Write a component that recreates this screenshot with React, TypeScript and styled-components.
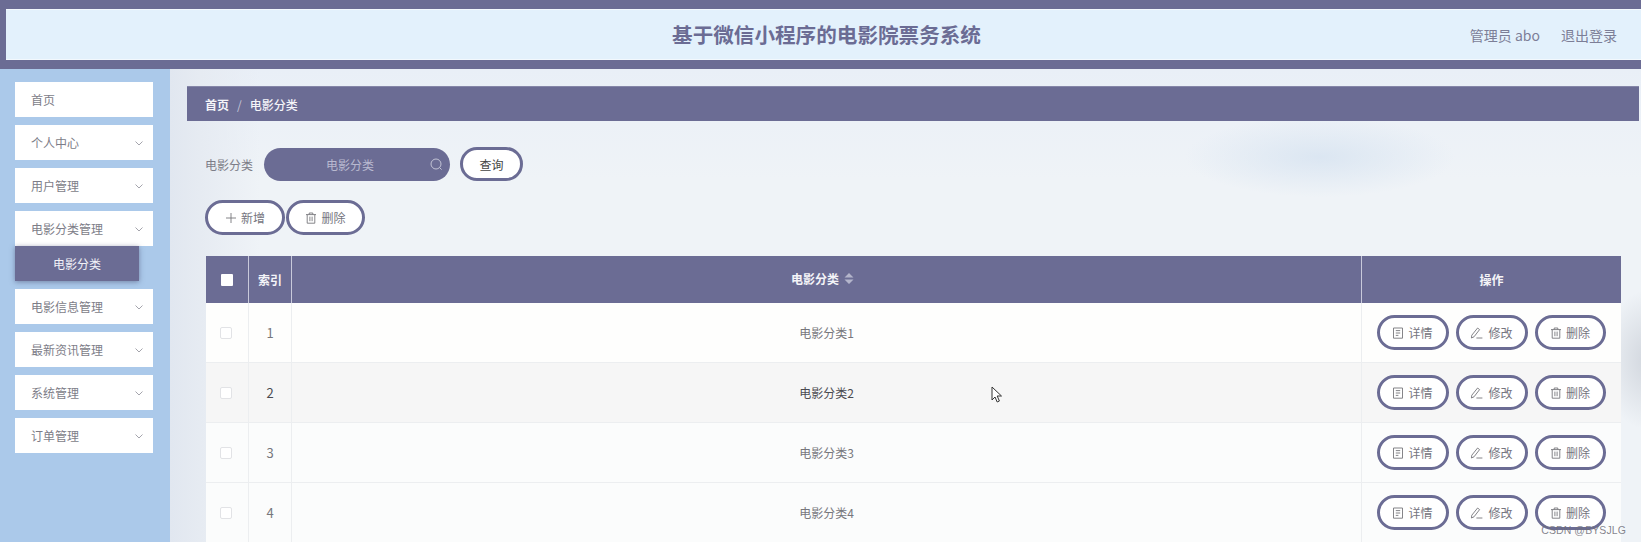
import styled, { createGlobalStyle } from "styled-components";

const purple = "#6b6c94";

const GlobalStyle = createGlobalStyle`
  html, body {
    margin: 0;
    padding: 0;
    height: 542px;
    overflow: hidden;
    font-family: "Noto Sans CJK SC", "Noto Sans", sans-serif;
  }
  * {
    box-sizing: border-box;
  }
`;

const Page = styled.div`
  width: 1641px;
  height: 542px;
  display: flex;
  flex-direction: column;
  position: relative;
  overflow: hidden;
`;

const Header = styled.header`
  height: 69px;
  flex: none;
  background: ${purple};
  padding: 9px 0 9px 6px;
`;

const HeaderInner = styled.div`
  height: 51px;
  background: #e3f1fc;
  border-top: 1px solid #f2f8fd;
  border-bottom: 1px solid #f2f8fd;
  display: grid;
  grid-template-columns: 1fr auto 1fr;
  align-items: center;
`;

const Title = styled.h1`
  grid-column: 2;
  margin: 0 0 0 6px;
  font-size: 20.6px;
  line-height: 1;
  font-weight: 700;
  color: ${purple};
`;

const UserBar = styled.div`
  grid-column: 3;
  justify-self: end;
  display: flex;
  gap: 21px;
  padding-right: 24px;
  font-size: 14px;
  color: #7c7e97;
`;

const Body = styled.div`
  flex: 1;
  display: flex;
  min-height: 0;
`;

const Sidebar = styled.aside`
  width: 170px;
  flex: none;
  background: #abc9ea;
  padding: 13px 17px 0 15px;
  display: flex;
  flex-direction: column;
`;

const MenuItem = styled.div`
  height: 35px;
  flex: none;
  margin-bottom: 8px;
  padding: 0 9px 0 16px;
  background: #fff;
  display: flex;
  align-items: center;
  justify-content: space-between;
  font-size: 12px;
  color: #7d7d88;
`;

const SubItem = styled.div`
  width: 124px;
  height: 35px;
  flex: none;
  margin: -8px 0 8px;
  position: relative;
  background: ${purple};
  box-shadow: 0 1px 5px rgba(70, 72, 110, 0.55);
  color: #f2f2f7;
  font-size: 12px;
  display: flex;
  align-items: center;
  justify-content: center;
`;

const Main = styled.main`
  flex: 1;
  min-width: 0;
  padding: 17px 2px 0 17px;
  background:
    radial-gradient(ellipse 135px 40px at 1150px 88px, rgba(216, 228, 241, 0.85), transparent),
    radial-gradient(ellipse 50px 70px at 1480px 291px, rgba(205, 210, 218, 0.9), transparent),
    linear-gradient(90deg, #e1e7f0 0, #e6ebf2 30px, rgba(239, 243, 247, 0) 90px),
    linear-gradient(180deg, #e9eff7 0, #eff3f7 110px, #eff3f7 100%);
`;

const Breadcrumb = styled.nav`
  height: 35px;
  background: ${purple};
  border-top: 1px solid #8586a8;
  padding-left: 18px;
  display: flex;
  align-items: center;
  gap: 8px;
  font-size: 12px;
  color: #f4f4f8;
`;

const Crumb = styled.span<{ $strong?: boolean }>`
  font-weight: ${(p) => (p.$strong ? 700 : 500)};
`;

const Slash = styled.span`
  color: #c5c6d8;
`;

const Content = styled.div`
  padding: 26px 18px 0;
`;

const SearchRow = styled.div`
  display: flex;
  align-items: center;
  height: 34px;
  font-size: 12px;
  color: #7d7d88;
`;

const SearchLabel = styled.label`
  width: 59px;
`;

const SearchPill = styled.div`
  width: 186px;
  height: 33px;
  border-radius: 17px;
  background: ${purple};
  color: #b9bad0;
  display: flex;
  align-items: center;
  justify-content: center;
  padding-right: 14px;
  position: relative;
  margin-right: 10px;
`;

const SearchIcon = styled.svg`
  position: absolute;
  right: 7px;
  top: 10px;
`;

const Pill = styled.button<{ $w: number; $h?: number; $dark?: boolean }>`
  width: ${(p) => p.$w}px;
  height: ${(p) => p.$h ?? 35}px;
  flex: none;
  padding: 0;
  border: 3px solid ${purple};
  border-radius: 18px;
  background: #fff;
  color: ${(p) => (p.$dark ? "#444" : "#757580")};
  font-family: inherit;
  font-size: 12px;
  display: inline-flex;
  align-items: center;
  justify-content: center;
  gap: 4px;
`;

const ActionRow = styled.div`
  display: flex;
  gap: 1px;
  margin: 19px 0 21px;
`;

const Table = styled.div`
  width: 1415px;
  margin-left: 1px;
`;

const columns = "42px 43px 1070px 260px";

const HeadRow = styled.div`
  display: grid;
  grid-template-columns: ${columns};
  height: 47px;
  background: ${purple};
  color: #f4f4f8;
  font-size: 12px;
  font-weight: 700;
`;

const HeadCell = styled.div<{ $rule?: boolean; $sort?: boolean }>`
  display: flex;
  align-items: center;
  justify-content: center;
  gap: 5px;
  padding: ${(p) => (p.$sort ? "0 8px 3px 0" : "0")};
  border-left: ${(p) => (p.$rule ? "1px solid #c9cadb" : "none")};
`;

const HeadBox = styled.span`
  width: 12px;
  height: 12px;
  background: #fff;
  border-radius: 1px;
`;

const rowTones = {
  plain: "#fefefd",
  shade: "#f6f6f6",
  cool: "#fbfcfc",
};

const Row = styled.div<{ $tone: keyof typeof rowTones }>`
  display: grid;
  grid-template-columns: ${columns};
  height: 60px;
  background: ${(p) => rowTones[p.$tone]};
  border-bottom: 1px solid #eceef0;
  font-size: 12px;
  color: ${(p) => (p.$tone === "shade" ? "#4a4a50" : "#77777c")};
`;

const Cell = styled.div<{ $rule?: boolean }>`
  display: flex;
  align-items: center;
  justify-content: center;
  border-left: ${(p) => (p.$rule ? "1px solid #eceef0" : "none")};
`;

const IndexCell = styled(Cell)`
  font-size: 13px;
`;

const RowBox = styled.span`
  width: 12px;
  height: 12px;
  margin-right: 2px;
  background: #fff;
  border: 1px solid #e2e3e6;
  border-radius: 2px;
`;

const OpsCell = styled(Cell)`
  gap: 7px;
  padding-right: 1px;
`;

const SortIcon = styled.svg`
  display: block;
`;

const Watermark = styled.div`
  position: absolute;
  right: 15px;
  bottom: 6px;
  font-family: "Liberation Sans", sans-serif;
  font-size: 10.5px;
  letter-spacing: 0.1px;
  color: rgba(110, 110, 120, 0.85);
`;

const Cursor = styled.svg`
  position: absolute;
  left: 991px;
  top: 386px;
`;

const Chevron = () => (
  <svg width="10" height="10" viewBox="0 0 10 10" fill="none" stroke="#9a9aa3" strokeWidth="0.9">
    <path d="M1.5 3.5 5 7l3.500-3.500" />
  </svg>
);

const TrashIcon = () => (
  <svg width="12" height="12" viewBox="0 0 12 12" fill="none" stroke="#77777c" strokeWidth="0.9">
    <path d="M1 2.600h10M4.200 2.600V1h3.600v1.600M2.200 2.600v8.600h7.600V2.600M4.900 4.600v4.600M7.100 4.600v4.600" />
  </svg>
);

const DocIcon = () => (
  <svg width="12" height="12" viewBox="0 0 12 12" fill="none" stroke="#77777c" strokeWidth="0.9">
    <path d="M1.500 1h9v10.200h-9zM3.800 3.600h4.400M3.800 6h4.400M3.800 8.400h2.600" />
  </svg>
);

const EditIcon = () => (
  <svg width="14" height="12" viewBox="0 0 14 12" fill="none" stroke="#77777c" strokeWidth="0.9">
    <path d="M7.600 1 9.600 2.600 4 9.800 1.400 11l.4-2.800zM6.400 11h6" />
  </svg>
);

const PlusIcon = () => (
  <svg width="12" height="12" viewBox="0 0 12 12" fill="none" stroke="#77777c" strokeWidth="0.9">
    <path d="M6 1v10M1 6h10" />
  </svg>
);

const menu = ["个人中心", "用户管理", "电影分类管理"];
const menuAfter = ["电影信息管理", "最新资讯管理", "系统管理", "订单管理"];

const toneFor = (n: number) => (n === 1 ? "plain" : n === 2 ? "shade" : "cool");

export default function App() {
  return (
    <Page>
      <GlobalStyle />
      <Header>
        <HeaderInner>
          <Title>基于微信小程序的电影院票务系统</Title>
          <UserBar>
            <span>管理员 abo</span>
            <span>退出登录</span>
          </UserBar>
        </HeaderInner>
      </Header>
      <Body>
        <Sidebar>
          <MenuItem>首页</MenuItem>
          {menu.map((label) => (
            <MenuItem key={label}>
              {label}
              <Chevron />
            </MenuItem>
          ))}
          <SubItem>电影分类</SubItem>
          {menuAfter.map((label) => (
            <MenuItem key={label}>
              {label}
              <Chevron />
            </MenuItem>
          ))}
        </Sidebar>
        <Main>
          <Breadcrumb>
            <Crumb $strong>首页</Crumb>
            <Slash>/</Slash>
            <Crumb>电影分类</Crumb>
          </Breadcrumb>
          <Content>
            <SearchRow>
              <SearchLabel>电影分类</SearchLabel>
              <SearchPill>
                电影分类
                <SearchIcon width="13" height="13" viewBox="0 0 13 13" fill="none" stroke="#c3c4d6" strokeWidth="1">
                  <circle cx="6" cy="6" r="5" />
                  <path d="M9.600 9.600 11.600 11.600" />
                </SearchIcon>
              </SearchPill>
              <Pill $w={63} $h={34} $dark>
                查询
              </Pill>
            </SearchRow>
            <ActionRow>
              <Pill $w={80}>
                <PlusIcon />
                新增
              </Pill>
              <Pill $w={79}>
                <TrashIcon />
                删除
              </Pill>
            </ActionRow>
            <Table>
              <HeadRow>
                <HeadCell>
                  <HeadBox />
                </HeadCell>
                <HeadCell $rule>索引</HeadCell>
                <HeadCell $rule $sort>
                  电影分类
                  <SortIcon width="10" height="13" viewBox="0 0 10 13" fill="#b4b5cb">
                    <path d="M5 1 9.500 5.500h-9zM5 12 .5 7.500h9z" />
                  </SortIcon>
                </HeadCell>
                <HeadCell $rule>操作</HeadCell>
              </HeadRow>
              {[1, 2, 3, 4].map((n) => (
                <Row key={n} $tone={toneFor(n)}>
                  <Cell>
                    <RowBox />
                  </Cell>
                  <IndexCell $rule>{n}</IndexCell>
                  <Cell $rule>电影分类{n}</Cell>
                  <OpsCell $rule>
                    <Pill $w={72}>
                      <DocIcon />
                      详情
                    </Pill>
                    <Pill $w={72}>
                      <EditIcon />
                      修改
                    </Pill>
                    <Pill $w={71}>
                      <TrashIcon />
                      删除
                    </Pill>
                  </OpsCell>
                </Row>
              ))}
            </Table>
          </Content>
        </Main>
      </Body>
      <Cursor width="12" height="18" viewBox="0 0 12 18" fill="#fff" stroke="#333" strokeWidth="1">
        <path d="M1 1v13l3-3 2.200 5 2.200-1-2.200-5H10.500z" />
      </Cursor>
      <Watermark>CSDN @BYSJLG</Watermark>
    </Page>
  );
}
